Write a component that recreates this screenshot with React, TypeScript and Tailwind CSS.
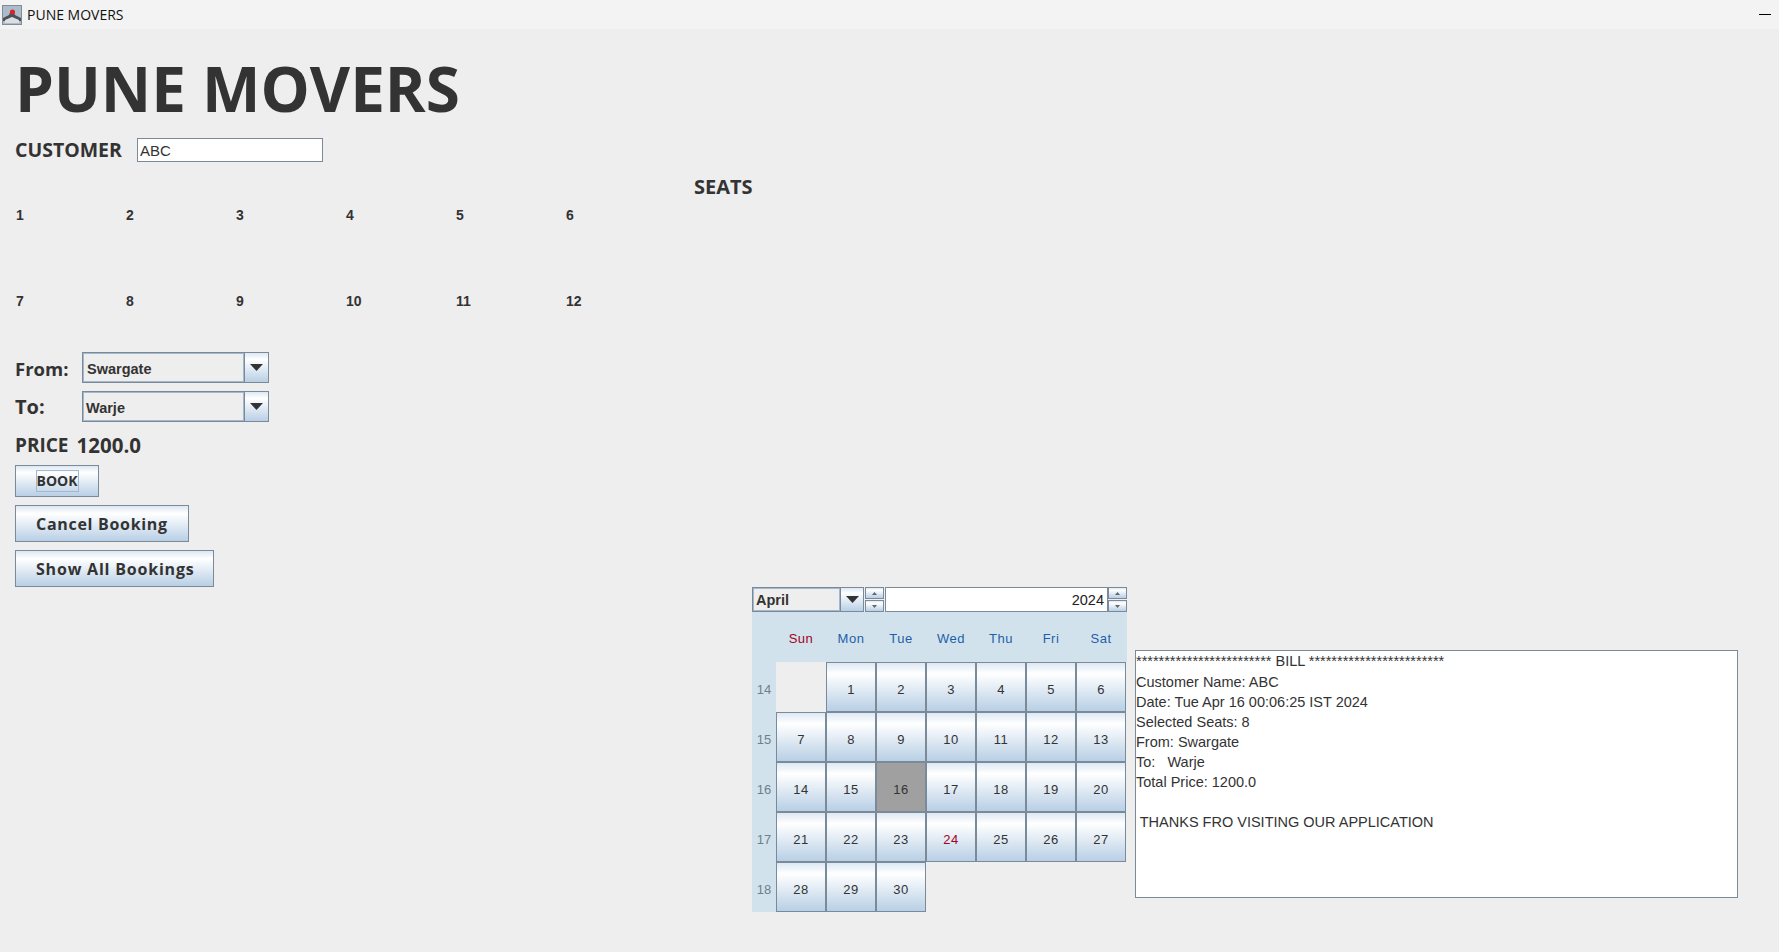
import React from 'react';

const segoe = "font-['Open_Sans',sans-serif]";
const arial = "font-['Liberation_Sans',Arial,sans-serif]";
const oceanButton = 'bg-[linear-gradient(180deg,#dde8f3_0%,#ffffff_22%,#b8cfe5_100%)] border border-[#7a8a99]';

const seats = [
  ['1', '2', '3', '4', '5', '6'],
  ['7', '8', '9', '10', '11', '12'],
];

const dayNames = ['Sun', 'Mon', 'Tue', 'Wed', 'Thu', 'Fri', 'Sat'];

const weeks: { week: number; days: (number | null)[] }[] = [
  { week: 14, days: [null, 1, 2, 3, 4, 5, 6] },
  { week: 15, days: [7, 8, 9, 10, 11, 12, 13] },
  { week: 16, days: [14, 15, 16, 17, 18, 19, 20] },
  { week: 17, days: [21, 22, 23, 24, 25, 26, 27] },
  { week: 18, days: [28, 29, 30, null, null, null, null] },
];

const billLines = [
  '************************ BILL ************************',
  'Customer Name: ABC',
  'Date: Tue Apr 16 00:06:25 IST 2024',
  'Selected Seats: 8',
  'From: Swargate',
  'To:   Warje',
  'Total Price: 1200.0',
  '',
  ' THANKS FRO VISITING OUR APPLICATION',
];

function Caret() {
  return (
    <svg width="13" height="7" viewBox="0 0 13 7">
      <path d="M0 0h13L6.500 7z" fill="#333333" />
    </svg>
  );
}

function Combo({ value, pad }: { value: string; pad: string }) {
  return (
    <div className="flex h-[31px] w-[187px] border border-[#7a8a99] bg-[#eeeeee]">
      <div className={`flex-1 flex items-center border border-[#a3b8cc] pt-[4px] ${pad} ${arial} text-[14.500px] font-bold text-[#333333]`}>
        {value}
      </div>
      <div className="w-[24px] flex items-center justify-center border-l border-[#7a8a99] bg-[linear-gradient(180deg,#dde8f3_0%,#ffffff_22%,#b8cfe5_100%)]">
        <Caret />
      </div>
    </div>
  );
}

function Spinner() {
  return (
    <div className="flex flex-col w-[19px] h-[25px] gap-[1px]">
      {[0, 1].map(i => (
        <div key={i} className={`flex-1 flex items-center justify-center ${oceanButton}`}>
          <svg width="5" height="3" viewBox="0 0 5 3" className={i === 1 ? 'rotate-180' : ''}>
            <path d="M2.500 0L5 3H0z" fill="#666666" />
          </svg>
        </div>
      ))}
    </div>
  );
}

function Calendar() {
  return (
    <div className="w-[375px] shrink-0">
      {/* month and year */}
      <div className="flex h-[25px] w-[375px]">
        <div className="flex w-[112px] border border-[#7a8a99] bg-[#eeeeee]">
          <div className={`flex-1 flex items-center border border-[#a3b8cc] pl-[2px] pt-[2px] ${arial} text-[14.500px] font-bold text-[#333333]`}>
            April
          </div>
          <div className="w-[23px] flex items-center justify-center border-l border-[#7a8a99] bg-[linear-gradient(180deg,#dde8f3_0%,#ffffff_22%,#b8cfe5_100%)]">
            <Caret />
          </div>
        </div>
        <div className="ml-[1px]"><Spinner /></div>
        <div className={`ml-[1px] w-[223px] flex items-center justify-end border border-[#7a8a99] bg-white pr-[3px] pt-[2px] ${arial} text-[14.500px] text-[#222222]`}>
          2024
        </div>
        <Spinner />
      </div>
      {/* weekday names */}
      <div className="flex h-[50px] w-[375px] bg-[#d2e2ec]">
        <div className="w-[24px]" />
        {dayNames.map(d => (
          <div
            key={d}
            className={`w-[50px] flex items-center justify-center pt-[4px] tracking-[0.5px] ${arial} text-[13px] ${d === 'Sun' ? 'text-[#a50021]' : 'text-[#1f5fa8]'}`}
          >
            {d}
          </div>
        ))}
      </div>
      {/* day grid */}
      {weeks.map(w => (
        <div key={w.week} className="flex h-[50px]">
          <div className={`w-[24px] flex items-center justify-center bg-[#d2e2ec] pt-[6px] ${arial} text-[13px] text-[#6f7f8c]`}>
            {w.week}
          </div>
          {w.days.map((d, i) =>
            d === null ? (
              <div key={i} className="w-[50px]" />
            ) : (
              <div
                key={i}
                className={`w-[50px] flex items-center justify-center pt-[6px] tracking-[0.5px] ${arial} text-[13px] ${
                  d === 16 ? 'bg-[#a0a0a0] border border-[#7a8a99]' : oceanButton
                } ${d === 24 ? 'text-[#a50021]' : 'text-[#333333]'}`}
              >
                {d}
              </div>
            )
          )}
        </div>
      ))}
    </div>
  );
}

export default function App() {
  return (
    <div className="h-[952px] w-[1779px] overflow-hidden bg-[#eeeeee] text-[#333333]">
      {/* window title bar */}
      <div className="flex h-[29px] items-center justify-between bg-[#f3f3f3] pl-[2px] pr-[8px]">
        <div className="flex items-center gap-[5px]">
          <svg width="20" height="20" viewBox="0 0 20 20">
            <rect width="20" height="20" fill="#aebbc8" />
            <rect x="0.500" y="0.500" width="19" height="19" fill="none" stroke="#7f8c99" />
            <path d="M1 13l6-3 2-5h2l2 5 6 3v3H1z" fill="#4d5157" />
            <path d="M3 15l7-3 7 3v3H3z" fill="#dcdfe2" />
            <circle cx="10.500" cy="7" r="2.500" fill="#d8232a" />
          </svg>
          <span className={`${segoe} text-[14px] text-[#111111]`}>PUNE MOVERS</span>
        </div>
        <div className="h-[1px] w-[12px] bg-black" />
      </div>

      <div className="pl-[15px]">
        <h1 className={`${segoe} mt-[17px] text-[62px] leading-[84px] font-bold text-[#333333]`}>PUNE MOVERS</h1>

        <div className="mt-[8px] flex h-[24px] items-center">
          <span className={`${segoe} w-[122px] text-[19.500px] font-bold`}>CUSTOMER</span>
          <div className={`flex h-[24px] w-[186px] items-center border border-[#7a8a99] bg-white pl-[2px] pt-[2px] ${arial} text-[15px]`}>ABC</div>
        </div>

        <div className={`${segoe} mt-[11px] pl-[679px] text-[20px] leading-[28px] font-bold`}>SEATS</div>

        <div className={`grid grid-cols-[repeat(6,110px)] ${arial} mt-[6px] text-[14px] font-bold`}>
          {seats.flat().map((s, i) => (
            <div key={s} className={`pl-[1px] leading-[16px] ${i < 6 ? 'h-[86px]' : ''}`}>{s}</div>
          ))}
        </div>

        <div className="mt-[43px] flex flex-col gap-[8px]">
          <div className="flex items-center">
            <span className={`${segoe} w-[67px] pt-[2px] text-[18.500px] font-bold`}>From:</span>
            <Combo value="Swargate" pad="pl-[3px]" />
          </div>
          <div className="flex items-center">
            <span className={`${segoe} w-[67px] text-[20px] font-bold`}>To:</span>
            <Combo value="Warje" pad="pl-[2px]" />
          </div>
        </div>

        <div className={`${segoe} mt-[8px] flex h-[30px] items-center gap-[8px] text-[19px] font-bold`}>
          <span>PRICE</span>
          <span className="text-[20.500px]">1200.0</span>
        </div>

        <div className="mt-[5px] flex flex-col items-start">
          <button className={`${oceanButton} ${segoe} flex h-[32px] w-[84px] items-center justify-center text-[14px] font-bold`}>
            <span className="border border-[#a3b8cc] leading-[20px]">BOOK</span>
          </button>
          <button className={`${oceanButton} ${segoe} mt-[8px] h-[37px] w-[174px] pl-[20px] pt-[1px] text-left text-[16px] tracking-[0.7px] font-bold`}>
            Cancel Booking
          </button>
          <button className={`${oceanButton} ${segoe} mt-[8px] h-[37px] w-[199px] pl-[20px] pt-[1px] text-left text-[16px] tracking-[0.8px] font-bold`}>
            Show All Bookings
          </button>
        </div>
      </div>

      {/* calendar and bill */}
      <div className="ml-[752px] flex items-start gap-[8px]">
        <Calendar />
        <div className={`mt-[63px] h-[248px] w-[603px] border border-[#7a8a99] bg-white ${arial} text-[14.500px] leading-[20px] whitespace-pre text-[#333333]`}>
          {billLines.map((line, i) => (
            <div key={i} className={i === 0 ? 'h-[21px]' : 'h-[20px]'}>{line}</div>
          ))}
        </div>
      </div>
    </div>
  );
}
